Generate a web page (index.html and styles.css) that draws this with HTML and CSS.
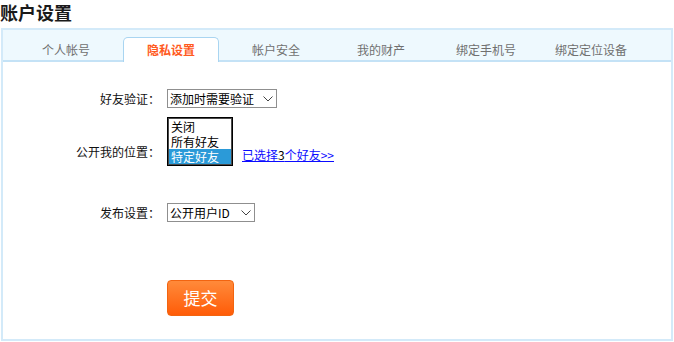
FILE: index.html
```html
<!DOCTYPE html>
<html lang="zh-CN">
<head>
<meta charset="utf-8">
<title>账户设置</title>
<link rel="stylesheet" href="styles.css">
</head>
<body>
<h1 class="title">账户设置</h1>
<div class="box">
  <ul class="tabs">
    <li class="tab">个人帐号</li>
    <li class="tab active">隐私设置</li>
    <li class="tab">帐户安全</li>
    <li class="tab">我的财产</li>
    <li class="tab">绑定手机号</li>
    <li class="tab">绑定定位设备</li>
  </ul>
  <form class="form">
    <div class="row row-verify">
      <label class="label">好友验证<span class="colon">：</span></label>
      <span class="select-wrap select-wide">
        <select class="select">
          <option>添加时需要验证</option>
          <option>允许任何人</option>
        </select>
        <svg class="chev" width="10" height="6" viewBox="0 0 10 6"><polyline points="0.5,0.5 5,5 9.5,0.5" fill="none" stroke="#444" stroke-width="1"/></svg>
      </span>
    </div>
    <div class="row row-location">
      <label class="label label-loc">公开我的位置<span class="colon">：</span></label>
      <div class="listbox" role="listbox">
        <div class="opt" role="option">关闭</div>
        <div class="opt" role="option">所有好友</div>
        <div class="opt selected" role="option" aria-selected="true">特定好友</div>
      </div>
      <a class="link" href="#">已选择<span class="num">3</span>个好友&gt;&gt;</a>
    </div>
    <div class="row row-publish">
      <label class="label">发布设置<span class="colon">：</span></label>
      <span class="select-wrap select-narrow">
        <select class="select">
          <option>公开用户ID</option>
          <option>匿名</option>
        </select>
        <svg class="chev" width="10" height="6" viewBox="0 0 10 6"><polyline points="0.5,0.5 5,5 9.5,0.5" fill="none" stroke="#444" stroke-width="1"/></svg>
      </span>
    </div>
    <div class="row row-submit">
      <span class="label"></span>
      <button type="button" class="submit">提交</button>
    </div>
  </form>
</div>
</body>
</html>
```
FILE: styles.css
```css
html, body {
  margin: 0;
  padding: 0;
  background: #fff;
}
body {
  width: 674px;
  font-family: "Noto Sans CJK SC", "Microsoft YaHei", sans-serif;
  font-size: 12px;
  color: #000;
}
.title {
  margin: 0;
  height: 28px;
  font-size: 18px;
  line-height: 24px;
  font-weight: bold;
  color: #1a1a1a;
}
.box {
  margin: 0 1px;
  border: 2px solid #d3eaf9;
}
.tabs {
  list-style: none;
  margin: 0;
  padding: 0 0 0 15px;
  height: 30px;
  display: flex;
  align-items: flex-end;
  background: #eef9fe;
  border-bottom: 2px solid #c4e2f6;
}
.tab {
  box-sizing: border-box;
  width: 96px;
  height: 25px;
  margin-right: 9px;
  margin-bottom: -2px;
  border: 1px solid transparent;
  border-bottom: none;
  line-height: 24px;
  text-align: center;
  color: #707070;
  font-size: 12px;
}
.tab.active {
  background: #fff;
  border-color: #a9d5f1;
  border-radius: 5px 5px 0 0;
  color: #ff5a1e;
  font-weight: bold;
}
.form {
  margin: 0;
  padding: 27px 0 23px;
}
.row {
  display: flex;
  align-items: center;
}
.label {
  width: 157px;
  margin-right: 7px;
  text-align: right;
  color: #111;
  flex-shrink: 0;
}
.colon {
  font-family: "Noto Sans CJK TC", "Noto Sans CJK SC", sans-serif;
}
.row-location {
  margin-top: 9px;
  align-items: flex-end;
}
.label-loc {
  padding-bottom: 6px;
}
.row-publish {
  margin-top: 37px;
}
.row-submit {
  margin-top: 58px;
}
.select-wrap {
  position: relative;
  display: inline-block;
  height: 19px;
}
.select-wide { width: 110px; }
.select-narrow { width: 88px; }
.select {
  -webkit-appearance: none;
  appearance: none;
  box-sizing: border-box;
  width: 100%;
  height: 19px;
  margin: 0;
  padding: 0 16px 0 2px;
  border: 1px solid #8f8f8f;
  border-radius: 0;
  background: #fff;
  font-family: inherit;
  font-size: 12px;
  line-height: 17px;
  color: #000;
}
.chev {
  position: absolute;
  right: 4px;
  top: 7px;
  pointer-events: none;
}
.listbox {
  box-sizing: border-box;
  width: 66px;
  border: 1px solid #000;
  padding: 1px;
  box-shadow: inset 0 0 0 1px #4a4a4a;
  background: #fff;
}
.opt {
  height: 15px;
  line-height: 15px;
  padding-left: 2px;
  color: #000;
  white-space: nowrap;
  overflow: hidden;
}
.opt.selected {
  background: #2b9ad8;
  color: #fff;
}
.link {
  margin-left: 9px;
  padding-bottom: 3px;
  color: #0b0bff;
  text-decoration: underline;
  font-size: 12px;
}
.num {
  color: #000;
}
.submit {
  box-sizing: border-box;
  width: 67px;
  height: 36px;
  margin: 0;
  padding: 0;
  border: 1px solid #f26410;
  border-radius: 4px;
  background: linear-gradient(#ff8a3a, #ff5c08);
  color: #fff;
  font-family: inherit;
  font-size: 17px;
  line-height: 34px;
  cursor: pointer;
}
```
